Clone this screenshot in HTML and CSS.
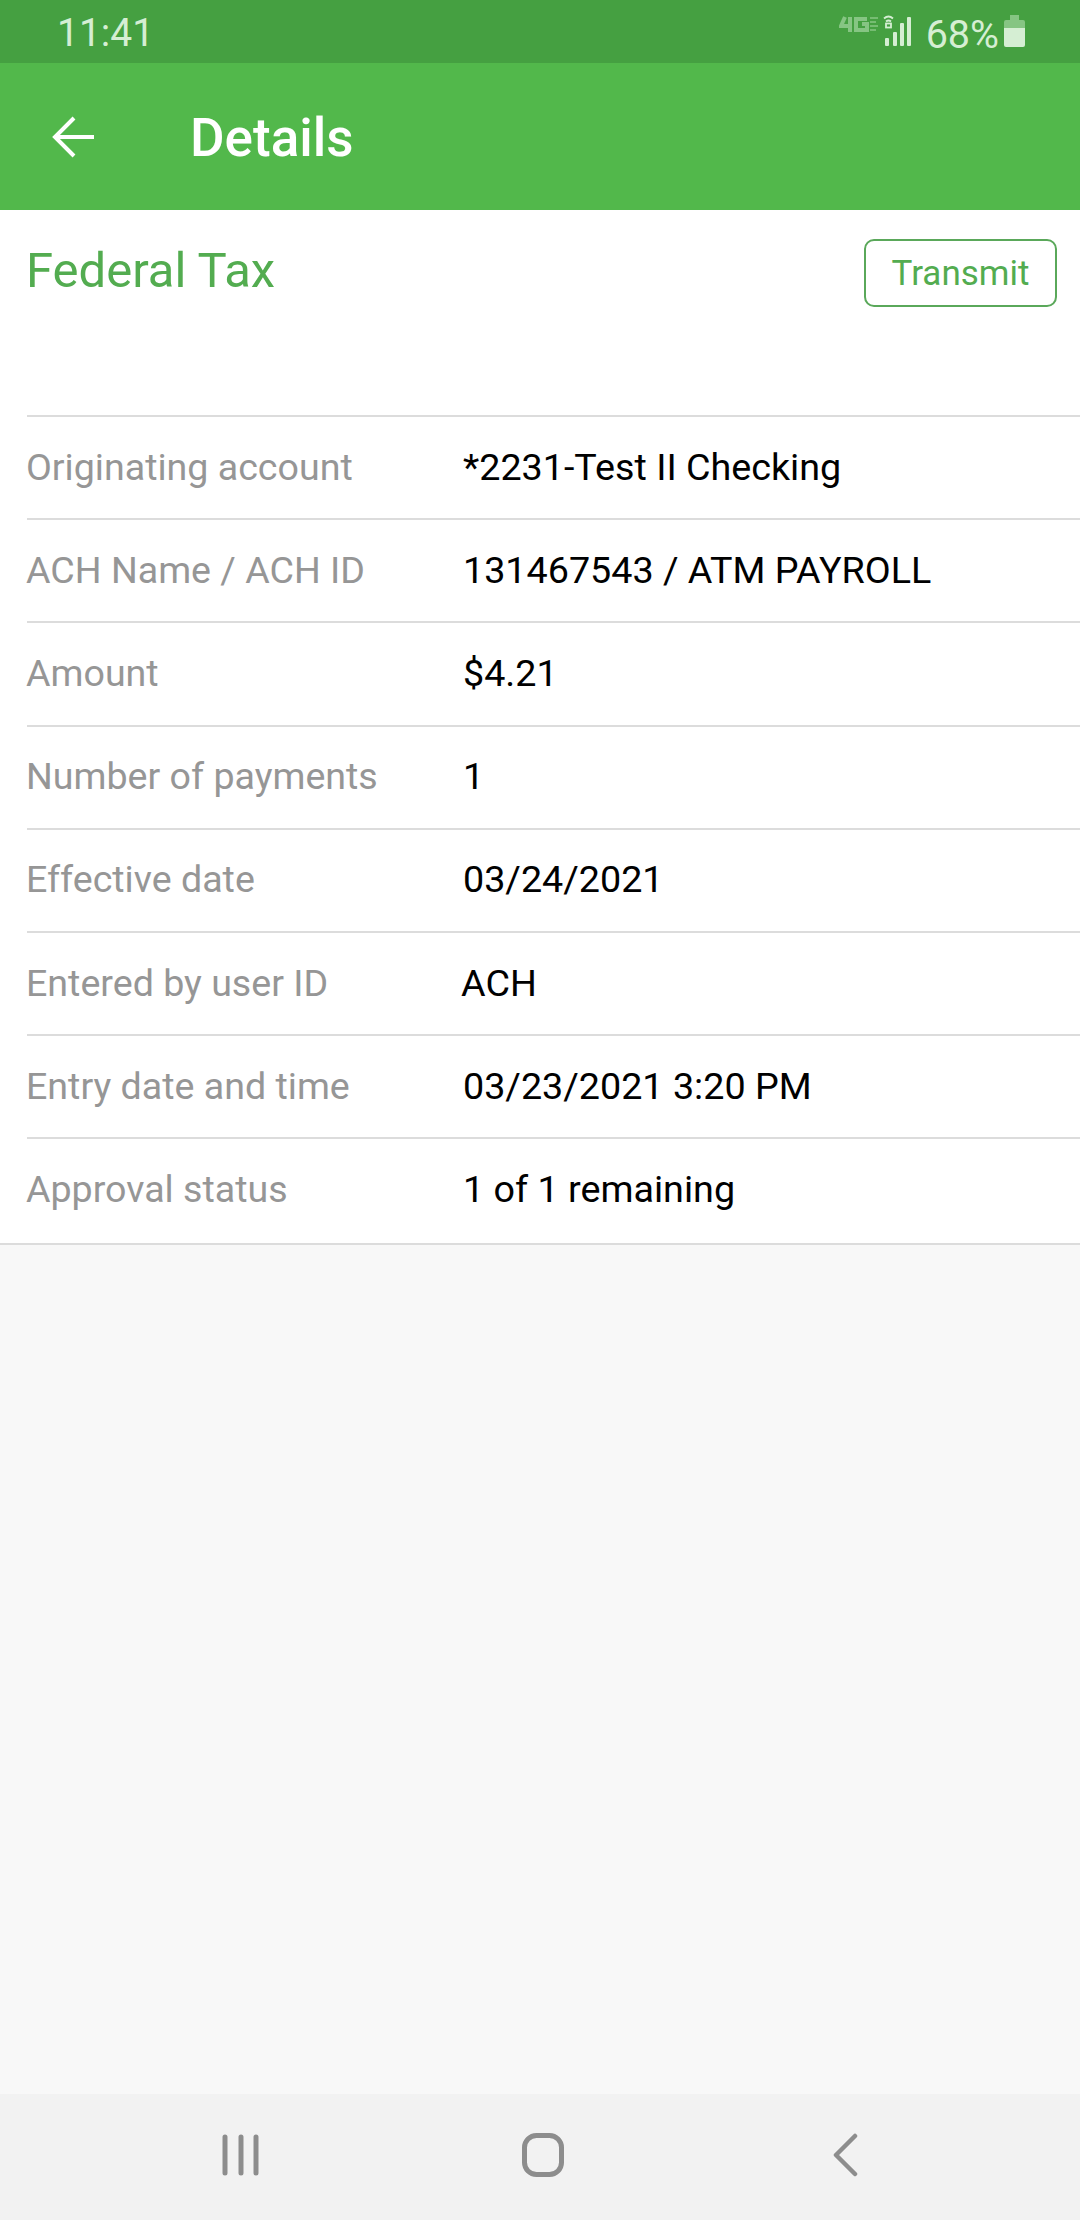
FILE: index.html
```html
<!DOCTYPE html>
<html lang="en">
<head>
<meta charset="utf-8">
<title>Details</title>
<link rel="stylesheet" href="styles.css">
</head>
<body>
<div class="screen">
  <div class="status">
    <span class="time">11:41</span>
    <div class="status-right">
      <svg class="net" width="74" height="63" viewBox="0 0 74 63">
        <g fill="none" stroke="#86c583" stroke-width="4">
          <path d="M6 17 2 26h11M11 17v15"/>
          <path d="M28 19H17v11h11v-6h-5"/>
        </g>
        <path d="M31 18h8M31 22h6M31 26h8M31 30h6" stroke="#86c583" stroke-width="1.500" fill="none"/>
        <g fill="none" stroke="#d5eed3" stroke-width="1.800">
          <path d="M45 18.500q4.500-4 9 0M47 21.500q2.500-2 5 0"/>
          <rect x="47" y="23.500" width="5" height="4"/>
        </g>
        <g fill="#d5eed3">
          <rect x="46" y="38" width="4" height="8" rx="1"/>
          <rect x="54" y="32" width="4" height="14" rx="1"/>
          <rect x="61" y="23" width="4" height="23" rx="1"/>
          <rect x="68" y="17" width="4" height="29" rx="1"/>
        </g>
      </svg>
      <span class="pct">68%</span>
      <svg class="batt" width="21" height="32" viewBox="0 0 21 32">
        <path d="M6 0h9v5h4a2 2 0 0 1 2 2v6H0V7a2 2 0 0 1 2-2h4z" fill="#86c583"/>
        <path d="M0 13h21v17a2 2 0 0 1-2 2H2a2 2 0 0 1-2-2z" fill="#d5eed3"/>
      </svg>
    </div>
  </div>
  <header class="appbar">
    <svg class="back" width="44" height="44" viewBox="0 0 44 44">
      <path d="M44 22H5M24 3 5 22l19 19" fill="none" stroke="#fff" stroke-width="4"/>
    </svg>
    <h1 class="title">Details</h1>
  </header>
  <main class="card">
    <div class="card-head">
      <h2 class="name">Federal Tax</h2>
      <button class="transmit" type="button">Transmit</button>
    </div>
    <dl class="rows">
      <div class="row"><dt>Originating account</dt><dd>*2231-Test II Checking</dd></div>
      <div class="row"><dt>ACH Name / ACH ID</dt><dd>131467543 / ATM PAYROLL</dd></div>
      <div class="row"><dt>Amount</dt><dd>$4.21</dd></div>
      <div class="row"><dt>Number of payments</dt><dd>1</dd></div>
      <div class="row"><dt>Effective date</dt><dd>03/24/2021</dd></div>
      <div class="row"><dt>Entered by user ID</dt><dd class="nudge">ACH</dd></div>
      <div class="row"><dt>Entry date and time</dt><dd>03/23/2021 3:20 PM</dd></div>
      <div class="row"><dt>Approval status</dt><dd>1 of 1 remaining</dd></div>
    </dl>
  </main>
  <div class="spacer"></div>
  <nav class="navbar">
    <svg class="nav-recent" width="40" height="44" viewBox="0 0 40 44">
      <path d="M4 4v36M20 4v36M35 4v36" stroke="#8d8d8d" stroke-width="5" stroke-linecap="round" fill="none"/>
    </svg>
    <svg class="nav-home" width="44" height="46" viewBox="0 0 44 46">
      <rect x="3.500" y="3.500" width="37" height="39" rx="12" fill="none" stroke="#8d8d8d" stroke-width="5"/>
    </svg>
    <svg class="nav-back" width="26" height="44" viewBox="0 0 26 44">
      <path d="M23 3 4 22l19 19" stroke="#8d8d8d" stroke-width="4.500" stroke-linecap="round" stroke-linejoin="round" fill="none"/>
    </svg>
  </nav>
</div>
</body>
</html>
```
FILE: styles.css
```css
* { box-sizing: border-box; margin: 0; padding: 0; }
html, body { width: 1080px; height: 2220px; overflow: hidden; }
body { font-family: Roboto, "Liberation Sans", sans-serif; background: #f8f8f8; }
.screen { width: 1080px; height: 2220px; display: flex; flex-direction: column; }
.status { height: 63px; flex: none; background: #45a041; display: flex; align-items: center; justify-content: space-between; padding: 0 55px 0 57px; color: #d5eed3; }
.time { font-size: 39px; line-height: 63px; margin-top: 3px; }
.status-right { display: flex; align-items: center; height: 63px; }
.net { display: block; margin-right: 13px; }
.pct { font-size: 39.500px; line-height: 63px; margin-top: 5px; margin-right: 5px; }
.batt { display: block; margin-top: -1px; }
.appbar { height: 147px; flex: none; background: #52b84b; display: flex; align-items: center; padding-left: 50px; }
.back { display: block; margin-top: 0; }
.title { font-size: 53px; font-weight: 500; color: #fff; margin-left: 96px; line-height: 60px; margin-top: 3px; }
.card { background: #fff; flex: none; border-bottom: 2px solid #dcdcdc; }
.card-head { height: 205px; display: flex; justify-content: space-between; align-items: flex-start; padding: 29px 23px 0 26px; }
.name { font-size: 49px; font-weight: 400; color: #53ac50; line-height: 60px; margin-top: 2px; }
.transmit { width: 193px; height: 68px; background: #fff; border: 2.500px solid #5aa85a; border-radius: 10px; color: #53ac50; font: 400 35px Roboto, sans-serif; }
.rows { padding-left: 27px; }
.row { height: 103.200px; border-top: 2px solid #dcdcdc; display: flex; align-items: center; font-size: 37.600px; padding-bottom: 2px; }
.row:last-child { height: 105.600px; padding-bottom: 4px; }
dt { width: 436px; flex: none; color: #969696; margin-left: -1px; margin-right: 1px; }
dd { color: #000; font-size: 37.700px; }
dd.nudge { margin-left: -2px; }
.spacer { flex: 1; }
.navbar { height: 126px; flex: none; background: #f2f2f2; display: flex; align-items: center; padding: 0 0 4px 221px; }
.nav-home { margin-left: 260px; }
.nav-back { margin-left: 267px; }
```
